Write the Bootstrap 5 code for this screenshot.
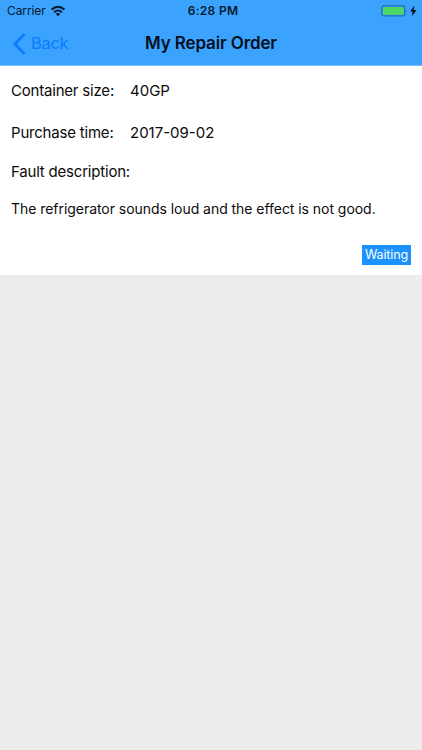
<!DOCTYPE html>
<html lang="en">
<head>
<meta charset="utf-8">
<meta name="viewport" content="width=device-width, initial-scale=1">
<title>My Repair Order</title>
<link href="https://cdn.jsdelivr.net/npm/bootstrap@5.3.0/dist/css/bootstrap.min.css" rel="stylesheet">
<style>
body{font-family:Inter,"Liberation Sans",sans-serif;background:#ededed;color:#0b0b0b;font-size:15px;line-height:20px}
.top-area{background:#3ba2fd;height:66px;border-bottom:1px solid #7dbdf8}
.status-row{height:22px;font-size:12px;line-height:22px;color:#04182c;padding:0 5px 0 7px}
.carrier{letter-spacing:-.1px}
.clock{font-weight:600;letter-spacing:.3px;padding-left:2px}
.nav-row{height:43px;padding:0 13px}
.back-link{color:#0a7cfd;font-size:16.5px;line-height:43px;gap:5px;letter-spacing:-.3px}
.page-title{font-size:17px;font-weight:600;line-height:43px;color:#04101e;letter-spacing:-.13px}
.order-panel{height:209px;padding:15px 11px 10px}
.purchase{margin-top:22px}
.fault{margin-top:19px}
.field-name{width:119px}
.field-name,.fault{letter-spacing:-.2px}
.detail{font-size:14px;margin-top:17px;letter-spacing:-.045px}
.status-tag{background:#1b92fd;font-size:12.5px;line-height:20px;width:49px;height:20px;letter-spacing:-.1px}
</style>
</head>
<body>
<header class="top-area">
  <div class="status-row row g-0">
    <div class="col d-flex align-items-center"><span class="carrier">Carrier</span>
      <svg class="ms-1" width="16" height="12" viewBox="0 0 16 12" fill="none" stroke="#04182c" stroke-width="2"><path d="M1.6 4.6Q8-1.2 14.4 4.6M4.1 7.2Q8 3.7 11.9 7.2"/><path d="M8 11.2 5.7 8.8Q8 7 10.3 8.8Z" fill="#04182c" stroke="none"/></svg>
    </div>
    <div class="col-auto clock">6:28 PM</div>
    <div class="col d-flex align-items-center justify-content-end">
      <svg width="36" height="12" viewBox="0 0 36 12"><rect x=".8" y=".9" width="23" height="10" rx="2.2" fill="#3ba2fd" stroke="#2170b5" stroke-width="1.2"/><rect x="2" y="2" width="20.6" height="7.8" rx="1" fill="#4cd964"/><path d="M25.3 4.2q1.5 1.7 0 3.5Z" fill="#2170b5"/><path d="M33.4 .6 29.2 6.4h2.4L30.8 11.2l4.8-6.2h-2.9Z" fill="#04101e"/></svg>
    </div>
  </div>
  <nav class="nav-row row g-0">
    <div class="col"><a class="back-link d-inline-flex align-items-center text-decoration-none" href="#"><svg width="13" height="22" viewBox="0 0 13 22" fill="none" stroke="currentColor" stroke-width="2.8"><path d="M11.5 1 1.9 11l9.6 10"/></svg><span>Back</span></a></div>
    <h1 class="page-title col-auto m-0">My Repair Order</h1>
    <div class="col"></div>
  </nav>
</header>
<main class="order-panel bg-white d-flex flex-column">
  <div class="d-flex"><div class="field-name">Container size:</div><div>40GP</div></div>
  <div class="d-flex purchase"><div class="field-name">Purchase time:</div><div>2017-09-02</div></div>
  <div class="fault">Fault description:</div>
  <p class="detail mb-0">The refrigerator sounds loud and the effect is not good.</p>
  <div class="status-tag text-white text-center align-self-end mt-auto">Waiting</div>
</main>
<script src="https://cdn.jsdelivr.net/npm/bootstrap@5.3.0/dist/js/bootstrap.bundle.min.js"></script>
</body>
</html>
